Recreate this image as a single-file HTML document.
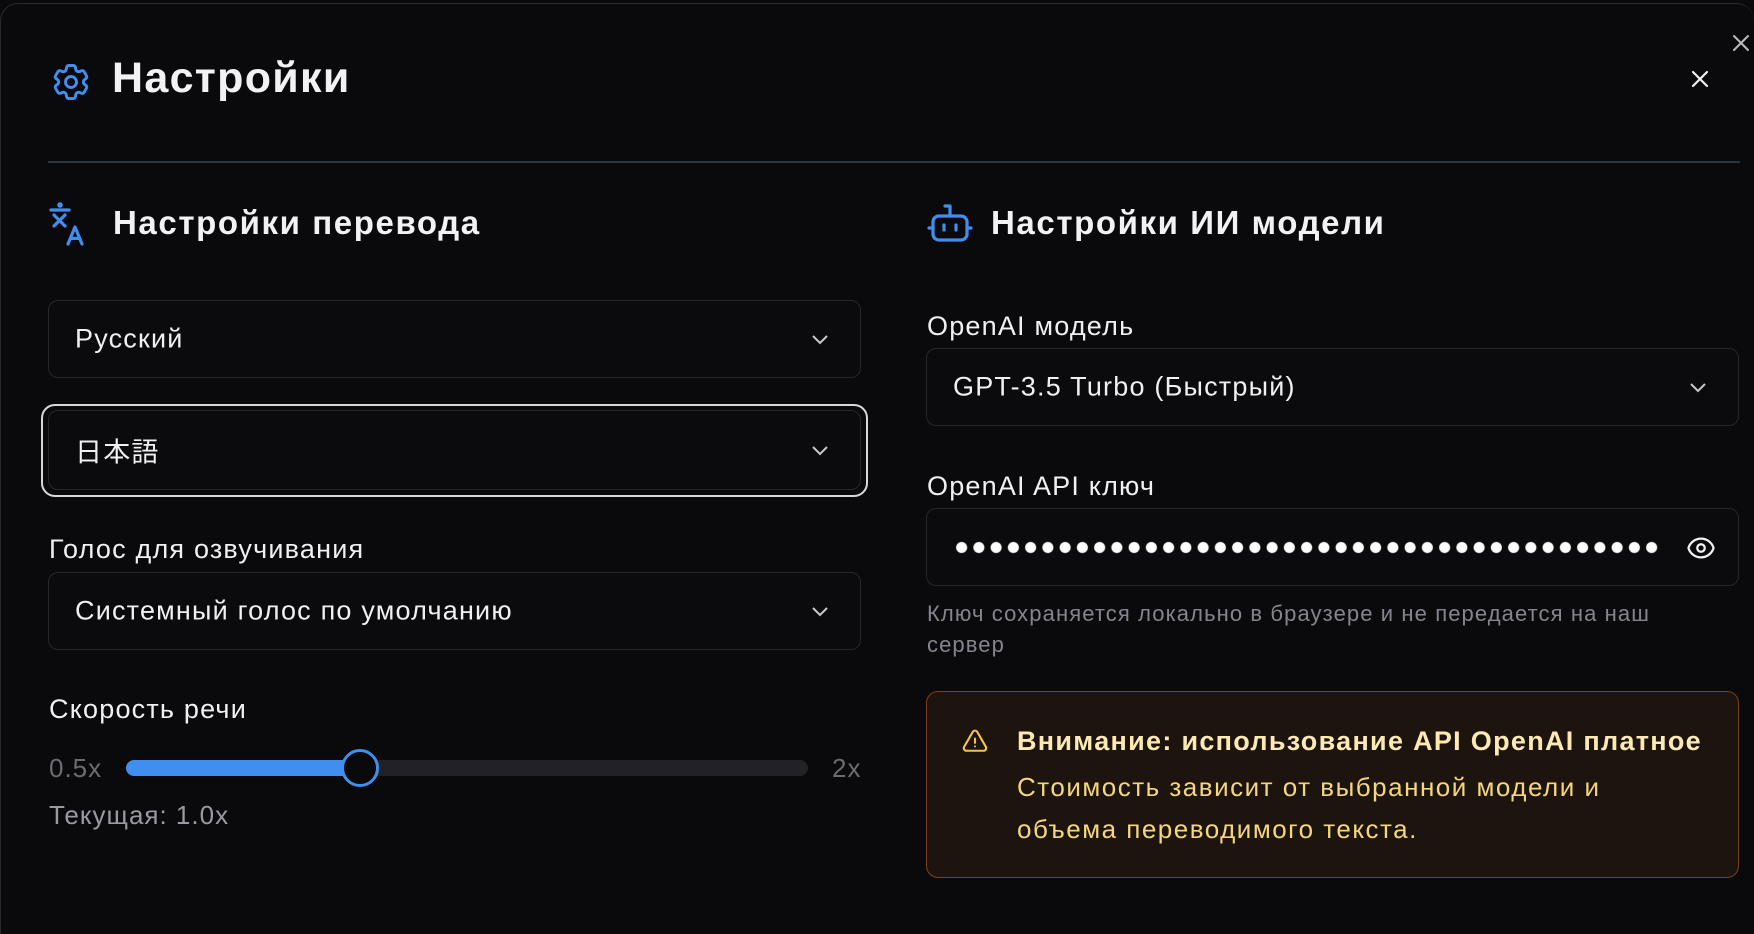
<!DOCTYPE html>
<html style="overflow:hidden;height:934px"><head><meta charset="utf-8"><style>
*{box-sizing:border-box;margin:0;padding:0}
body{width:1754px;height:934px;background:#0a0a0c;font-family:"Liberation Sans","Noto Sans CJK JP",sans-serif;color:#f2f2f4;position:relative;overflow:hidden}
.modal{position:absolute;left:0;top:3px;width:1754px;height:931px;border:1px solid #2a2a2e;border-bottom:none;border-right:none;border-radius:18px 18px 0 0;background:#0a0a0c}
.a{position:absolute;white-space:nowrap}
.sel{position:absolute;border:1.5px solid #27272b;border-radius:10px;background:#0b0b0e;font-size:27px;letter-spacing:1.2px;color:#f0f0f2}
.sel span{position:absolute;left:26px;top:50%;transform:translateY(-50%)}
.chev{position:absolute;right:30px;top:50%;margin-top:-7px}
.lbl{font-size:27px;letter-spacing:1.2px;color:#f0f0f2}
</style></head><body>
<div class="modal"></div>
<svg class="a" style="left:49px;top:60px" width="44" height="44" viewBox="0 0 24 24" fill="none" stroke="#3f8ef0" stroke-width="1.6" stroke-linecap="round" stroke-linejoin="round"><path d="M9.594 3.94c.09-.542.56-.94 1.11-.94h2.593c.55 0 1.02.398 1.11.94l.213 1.281c.063.374.313.686.645.87.074.04.147.083.22.127.325.196.72.257 1.075.124l1.217-.456a1.125 1.125 0 0 1 1.37.49l1.296 2.247a1.125 1.125 0 0 1-.26 1.431l-1.003.827c-.293.241-.438.613-.43.992a7.723 7.723 0 0 1 0 .255c-.008.378.137.75.43.991l1.004.827c.424.35.534.955.26 1.430l-1.298 2.247a1.125 1.125 0 0 1-1.369.491l-1.217-.456c-.355-.133-.75-.072-1.076.124a6.47 6.47 0 0 1-.22.128c-.331.183-.581.495-.644.869l-.213 1.281c-.09.543-.56.94-1.110.94h-2.594c-.55 0-1.019-.398-1.110-.94l-.213-1.281c-.062-.374-.312-.686-.644-.87a6.520 6.520 0 0 1-.22-.127c-.325-.196-.72-.257-1.076-.124l-1.217.456a1.125 1.125 0 0 1-1.369-.49l-1.297-2.247a1.125 1.125 0 0 1 .26-1.431l1.004-.827c.292-.24.437-.613.43-.991a6.932 6.932 0 0 1 0-.255c.007-.38-.138-.751-.43-.992l-1.004-.827a1.125 1.125 0 0 1-.26-1.430l1.297-2.247a1.125 1.125 0 0 1 1.37-.491l1.216.456c.356.133.751.072 1.076-.124.072-.044.146-.086.22-.128.332-.183.582-.495.644-.869l.214-1.280Z"/><circle cx="12" cy="12" r="3"/></svg>
<div class="a" style="left:112px;top:54px;font-size:43px;letter-spacing:1.3px;font-weight:bold">Настройки</div>
<svg class="a" style="left:1690px;top:69px" width="20" height="20" viewBox="0 0 20 20" stroke="#f0f0f0" stroke-width="2.2" stroke-linecap="round"><path d="M3 3L17 17M17 3L3 17"/></svg>
<svg class="a" style="left:1731px;top:33px" width="20" height="20" viewBox="0 0 20 20" stroke="#bbb" stroke-width="2" stroke-linecap="round"><path d="M3 3L17 17M17 3L3 17"/></svg>
<div class="a" style="left:48px;top:161px;width:1692px;height:2px;background:#2e3440"></div>

<svg class="a" style="left:48px;top:200px" width="48" height="48" viewBox="0 0 24 24" fill="none" stroke="#3f8ef0" stroke-width="1.6" stroke-linecap="round" stroke-linejoin="round"><circle cx="6" cy="2.5" r=".6" fill="#3f8ef0"/><path d="M1.5 5H10.5M3 7.5L8.5 13M8.5 7.5L3 13M10 22L13.5 13.5L17 22M11.2 19.2H15.8"/></svg>
<div class="a" style="left:113px;top:204px;font-size:33px;letter-spacing:1.6px;font-weight:bold">Настройки перевода</div>

<div class="sel" style="left:48px;top:300px;width:813px;height:78px"><span>Русский</span><svg class="chev" width="20" height="14" viewBox="0 0 20 14" fill="none" stroke="#c8c8cc" stroke-width="2"><path d="M3 4L10 11L17 4"/></svg></div>
<div class="a" style="left:41px;top:404px;width:827px;height:93px;border:2.5px solid #d8d8d8;border-radius:14px"></div>
<div class="sel" style="left:48px;top:410px;width:813px;height:80px"><span>日本語</span><svg class="chev" width="20" height="14" viewBox="0 0 20 14" fill="none" stroke="#c8c8cc" stroke-width="2"><path d="M3 4L10 11L17 4"/></svg></div>

<div class="a lbl" style="left:49px;top:534px">Голос для озвучивания</div>
<div class="sel" style="left:48px;top:572px;width:813px;height:78px"><span>Системный голос по умолчанию</span><svg class="chev" width="20" height="14" viewBox="0 0 20 14" fill="none" stroke="#c8c8cc" stroke-width="2"><path d="M3 4L10 11L17 4"/></svg></div>

<div class="a lbl" style="left:49px;top:694px">Скорость речи</div>
<div class="a" style="left:49px;top:753px;font-size:26px;letter-spacing:1px;color:#6b6b72">0.5x</div>
<div class="a" style="left:126px;top:760px;width:682px;height:16px;border-radius:8px;background:#222226"></div>
<div class="a" style="left:126px;top:760px;width:236px;height:16px;border-radius:8px;background:#3f8ef0"></div>
<div class="a" style="left:341px;top:749px;width:38px;height:38px;border-radius:50%;background:#0a0a0c;border:3px solid #3f8ef0"></div>
<div class="a" style="left:832px;top:753px;font-size:26px;letter-spacing:1px;color:#6b6b72">2x</div>
<div class="a" style="left:49px;top:800px;font-size:26px;letter-spacing:1px;color:#9a9aa2">Текущая: 1.0x</div>

<svg class="a" style="left:926px;top:203px" width="48" height="40" viewBox="0 0 48 40" fill="none" stroke="#3f8ef0" stroke-width="3.2" stroke-linecap="round" stroke-linejoin="round"><rect x="7" y="13" width="34" height="24" rx="6"/><path d="M24 13V3H19M3 25H7M41 25H45M18 22V27M30 22V27"/></svg>
<div class="a" style="left:991px;top:204px;font-size:33px;letter-spacing:1.6px;font-weight:bold">Настройки ИИ модели</div>

<div class="a lbl" style="left:927px;top:311px">OpenAI модель</div>
<div class="sel" style="left:926px;top:348px;width:813px;height:78px"><span>GPT-3.5 Turbo (Быстрый)</span><svg class="chev" width="20" height="14" viewBox="0 0 20 14" fill="none" stroke="#c8c8cc" stroke-width="2"><path d="M3 4L10 11L17 4"/></svg></div>
<div class="a lbl" style="left:927px;top:471px">OpenAI API ключ</div>
<div class="sel" style="left:926px;top:508px;width:813px;height:78px;overflow:hidden">
<div class="a" style="left:26px;top:30px;width:708px;height:17px;background:radial-gradient(circle,#ffffff 5px,transparent 6px) 0 0/17.25px 17px repeat-x"></div>
<svg class="a" style="right:22px;top:24px" width="30" height="30" viewBox="0 0 24 24" fill="none" stroke="#f0f0f0" stroke-width="1.8" stroke-linecap="round" stroke-linejoin="round"><path d="M2.04 12.32a1 1 0 0 1 0-.64C3.42 7.51 7.36 4.5 12 4.5s8.57 3 9.96 7.18a1 1 0 0 1 0 .64C20.58 16.49 16.64 19.5 12 19.5s-8.57-3-9.96-7.18Z"/><circle cx="12" cy="12" r="3"/></svg></div>
<div class="a" style="left:927px;top:598px;font-size:22px;letter-spacing:1.1px;color:#85858e;line-height:31px">Ключ сохраняется локально в браузере и не передается на наш<br>сервер</div>

<div class="a" style="left:926px;top:691px;width:813px;height:187px;border:1.5px solid #7c401c;border-radius:12px;background:#1d1410"></div>
<svg class="a" style="left:960px;top:728px" width="30" height="28" viewBox="0 0 24 24" fill="none" stroke="#f1c34a" stroke-width="1.8" stroke-linecap="round" stroke-linejoin="round"><path d="M12 9v3.75m-9.3 3.38c-.87 1.5.22 3.37 1.95 3.37h14.7c1.730 0 2.82-1.87 1.95-3.370L13.95 3.38c-.87-1.5-3.03-1.5-3.9 0L2.7 16.13ZM12 15.75h.01"/></svg>
<div class="a" style="left:1017px;top:726px;font-size:27px;letter-spacing:1.3px;font-weight:bold;color:#fdeab2">Внимание: использование API OpenAI платное</div>
<div class="a" style="left:1017px;top:766px;font-size:26px;letter-spacing:1.5px;color:#f3d77a;line-height:42px">Стоимость зависит от выбранной модели и<br>объема переводимого текста.</div>
</body></html>
